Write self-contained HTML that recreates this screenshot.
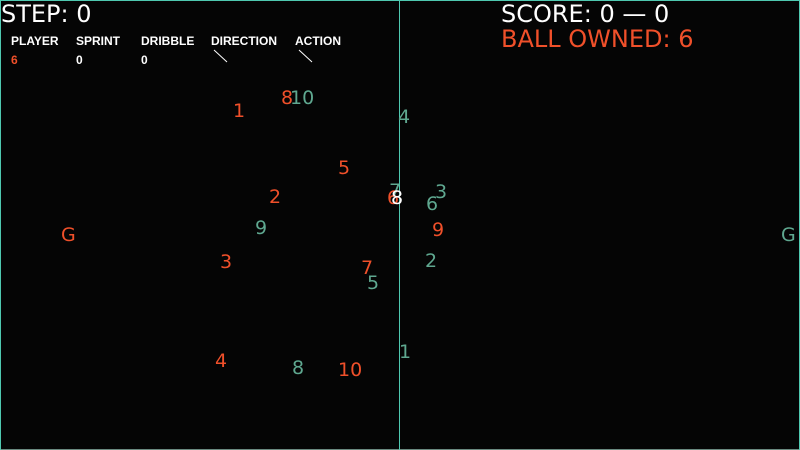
<!DOCTYPE html>
<html><head><meta charset="utf-8"><style>
html,body{margin:0;padding:0;background:#050505;}
#c{position:relative;width:800px;height:450px;background:#050505;overflow:hidden;font-family:"DejaVu Sans","Liberation Sans",sans-serif;}
#c div{position:absolute;line-height:1;white-space:pre;}
.o{color:#f0502a;font-size:19px;transform:translate(2px,3px);}
.t{color:#5fa890;font-size:19px;transform:translate(2px,3px);}
.w{color:#fff;}
.n{font-size:19px;transform:translate(2px,3px);}
.s{font-size:12px;font-weight:bold;font-family:"Liberation Sans",sans-serif;transform:translateY(1px);}
.line{background:#4fc8b0;}
</style></head><body><div id="c">
<div class="line" style="left:0;top:0;width:800px;height:1px"></div>
<div class="line" style="left:0;top:449px;width:800px;height:1px;background:#6a8a80"></div>
<div class="line" style="left:0;top:0;width:1px;height:450px"></div>
<div class="line" style="left:799px;top:0;width:1px;height:450px"></div>
<div class="line" style="left:399px;top:0;width:1px;height:450px"></div>

<div class="w" style="left:1px;top:2px;font-size:24px">STEP: 0</div>
<div class="w" style="left:501px;top:2px;font-size:24px">SCORE: 0 — 0</div>
<div style="left:501px;top:27px;font-size:24px;color:#f0502a">BALL OWNED: 6</div>

<div class="w s" style="left:11px;top:34px">PLAYER</div>
<div class="w s" style="left:76px;top:34px">SPRINT</div>
<div class="w s" style="left:141px;top:34px">DRIBBLE</div>
<div class="w s" style="left:211px;top:34px">DIRECTION</div>
<div class="w s" style="left:295px;top:34px">ACTION</div>
<div class="s" style="left:11px;top:53px;color:#f0502a">6</div>
<div class="w s" style="left:76px;top:53px">0</div>
<div class="w s" style="left:141px;top:53px">0</div>
<svg style="position:absolute;left:0;top:0" width="800" height="450"><line x1="214" y1="50" x2="227" y2="62" stroke="#fff" stroke-width="1"/><line x1="299" y1="50" x2="312" y2="62" stroke="#fff" stroke-width="1"/></svg>

<div class="o" style="left:231px;top:99px">1</div>
<div class="o" style="left:279px;top:86px">8</div>
<div class="t" style="left:288px;top:86px">10</div>
<div class="t" style="left:396px;top:105px">4</div>
<div class="o" style="left:336px;top:156px">5</div>
<div class="o" style="left:267px;top:185px">2</div>
<div class="t" style="left:387px;top:179px">7</div>
<div class="o" style="left:385px;top:186px">6</div>
<div class="w n" style="left:389px;top:186px">8</div>
<div class="t" style="left:433px;top:180px">3</div>
<div class="t" style="left:424px;top:192px">6</div>
<div class="t" style="left:253px;top:216px">9</div>
<div class="o" style="left:430px;top:218px">9</div>
<div class="o" style="left:59px;top:223px">G</div>
<div class="t" style="left:779px;top:223px">G</div>
<div class="o" style="left:218px;top:250px">3</div>
<div class="t" style="left:423px;top:249px">2</div>
<div class="o" style="left:359px;top:256px">7</div>
<div class="t" style="left:365px;top:271px">5</div>
<div class="t" style="left:397px;top:340px">1</div>
<div class="o" style="left:213px;top:349px">4</div>
<div class="t" style="left:290px;top:356px">8</div>
<div class="o" style="left:336px;top:358px">10</div>
</div></body></html>
